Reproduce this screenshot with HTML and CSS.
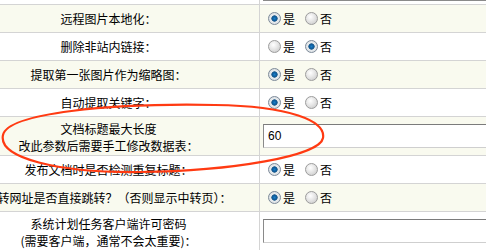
FILE: index.html
```html
<!DOCTYPE html>
<html lang="zh-CN">
<head>
  <meta charset="UTF-8">
  <title>系统基本参数</title>
  <link rel="stylesheet" href="styles.css">
</head>
<body>

<div class="config">
  <div class="row stub">
    <div class="label"></div>
    <div class="val text"><span class="edge"></span></div>
  </div>

  <div class="row alt">
    <div class="label">远程图片本地化：</div>
    <div class="val">
      <label><input type="radio" name="remote" checked>是</label>
      <label><input type="radio" name="remote">否</label>
    </div>
  </div>

  <div class="row">
    <div class="label">删除非站内链接：</div>
    <div class="val">
      <label><input type="radio" name="dellink">是</label>
      <label><input type="radio" name="dellink" checked>否</label>
    </div>
  </div>

  <div class="row alt">
    <div class="label">提取第一张图片作为缩略图：</div>
    <div class="val">
      <label><input type="radio" name="litpic" checked>是</label>
      <label><input type="radio" name="litpic">否</label>
    </div>
  </div>

  <div class="row">
    <div class="label">自动提取关键字：</div>
    <div class="val">
      <label><input type="radio" name="keyword" checked>是</label>
      <label><input type="radio" name="keyword">否</label>
    </div>
  </div>

  <div class="row alt">
    <div class="label two">文档标题最大长度<br>改此参数后需要手工修改数据表：</div>
    <div class="val text"><input type="text" class="field" value="60"></div>
  </div>

  <div class="row">
    <div class="label">发布文档时是否检测重复标题：</div>
    <div class="val">
      <label><input type="radio" name="repeat" checked>是</label>
      <label><input type="radio" name="repeat">否</label>
    </div>
  </div>

  <div class="row alt">
    <div class="label">跳转网址是否直接跳转？（否则显示中转页）：</div>
    <div class="val">
      <label><input type="radio" name="jump" checked>是</label>
      <label><input type="radio" name="jump">否</label>
    </div>
  </div>

  <div class="row">
    <div class="label two">系统计划任务客户端许可密码<br>(需要客户端，通常不会太重要)：</div>
    <div class="val text"><input type="text" class="field" value=""></div>
  </div>
</div>

<!-- hand drawn marker round the title length option -->
<svg class="mark" width="486" height="250" viewBox="0 0 486 250">
  <path d="M 215 105 C 290 106 326 121 323 138 C 320 156 232 171 140 172 C 58 173 -2 158 3 135 C 8 113 110 103 215 105 Z"
        fill="none" stroke="#ff3a12" stroke-width="2.2" stroke-linejoin="round"/>
</svg>

</body>
</html>
```

FILE: styles.css
```css
body { margin:0; padding:0; background:#fff; overflow:hidden; font-family:"Noto Sans CJK SC", sans-serif; font-size:12px; color:#000; }
.config { margin-left:-42px; }
.row { display:grid; grid-template-columns:302px 1fr; border-top:1px solid #d4d4d4; background:#fff; }
.row.alt { background:#f9faef; }
.row.stub { border-top:0; height:4px; }
.label { border-right:1px solid #d4d4d4; text-align:center; white-space:nowrap; line-height:17px; padding:5px 0; }
.label.two { padding:3px 0 1px; }
.stub .label { padding:0; }
.val { display:flex; align-items:center; padding-left:8px; white-space:nowrap; }
.val.text { padding-left:3px; }
.val label { display:flex; align-items:center; margin-right:10px; line-height:17px; }
.edge { display:block; width:100%; height:1px; background:#8a8a8a; align-self:flex-start; }

input[type=radio] { appearance:none; -webkit-appearance:none; width:13px; height:13px; margin:0 2px 0 0; border-radius:50%;
  border:1px solid #9c9c9c; background:radial-gradient(circle at 40% 35%, #fff 0, #e6e6e6 45%, #c4c4c4 100%); box-sizing:border-box; }
input[type=radio]:checked { border-color:#7d8a99; background:radial-gradient(circle at 50% 50%, #1a7fc8 0, #0d5a99 28%, #3d6f96 38%, #e8ecef 44%, #d2d6da 100%); }

.field { width:400px; height:24px; box-sizing:border-box; margin:0; padding:0 4px; border:1px solid; border-color:#7b7b7b #cfcfcf #cfcfcf #8a8a8a;
  font-family:"Liberation Sans", Arial, sans-serif; font-size:12px; color:#000; background:#fff; }

.mark { position:absolute; left:0; top:0; pointer-events:none; }
```
